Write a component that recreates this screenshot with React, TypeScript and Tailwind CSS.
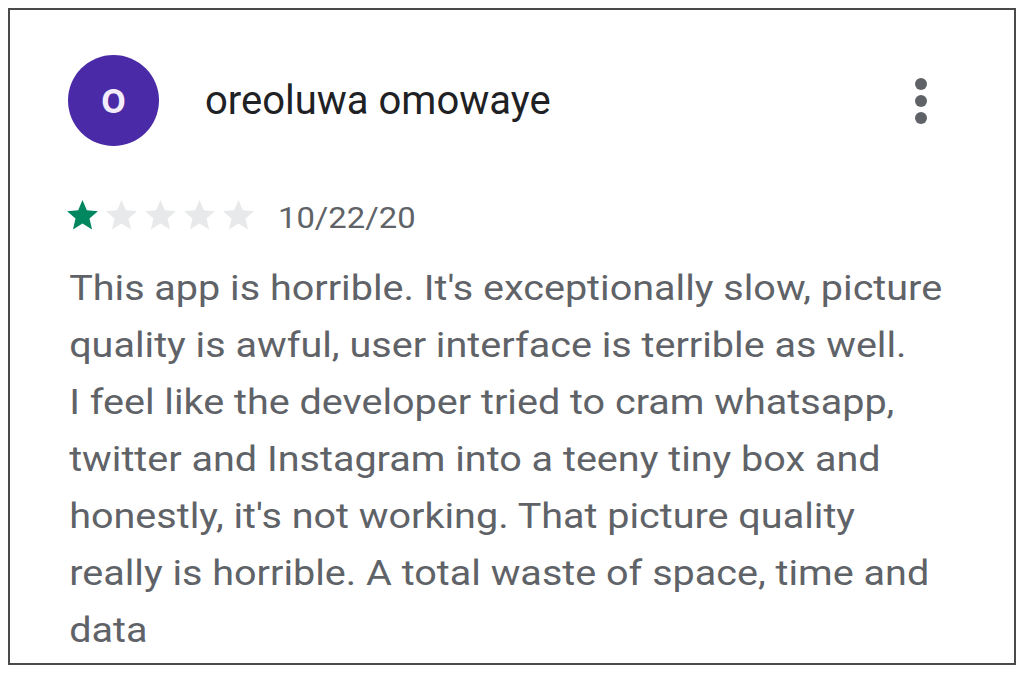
import React from 'react';

const lines = [
  "This app is horrible. It's exceptionally slow, picture",
  'quality is awful, user interface is terrible as well.',
  'I feel like the developer tried to cram whatsapp,',
  'twitter and Instagram into a teeny tiny box and',
  "honestly, it's not working. That picture quality",
  'really is horrible. A total waste of space, time and',
  'data',
];

function Star({ filled }: { filled: boolean }) {
  return (
    <svg width="37" height="37" viewBox="0 0 24 24" className={filled ? 'text-[#01875f]' : 'text-[#e8e9eb]'}>
      <path
        fill="currentColor"
        d="M12 17.27L18.18 21l-1.64-7.03L22 9.24l-7.19-.61L12 2 9.19 8.63 2 9.24l5.46 4.73L5.82 21z"
      />
    </svg>
  );
}

export default function App() {
  const rating = 1;

  return (
    <div className="w-[1024px] h-[673px] bg-white pt-2 pl-2" style={{ fontFamily: 'Roboto, "Liberation Sans", sans-serif' }}>
      <div className="w-[1008px] h-[657px] border-2 border-[#4a4a4a] pl-[58px] pt-[45px] overflow-hidden">
        {/* Header */}
        <div className="flex items-center h-[91px]">
          <div className="w-[91px] h-[91px] rounded-full bg-[#4a2aa6] flex items-center justify-center shrink-0">
            <span className="text-[44px] font-medium text-[#f5ecfb] leading-none -mt-[6px]">o</span>
          </div>
          <div className="ml-[46px] text-[40px] text-[#202124] leading-none">oreoluwa omowaye</div>
          <div className="ml-auto mr-[87px] flex flex-col gap-[5px]">
            <span className="w-3 h-3 rounded-full bg-[#5f6368]" />
            <span className="w-3 h-3 rounded-full bg-[#5f6368]" />
            <span className="w-3 h-3 rounded-full bg-[#5f6368]" />
          </div>
        </div>

        {/* Rating */}
        <div className="flex items-center h-[37px] mt-[51px] -ml-[4px]">
          <div className="flex gap-[2px]">
            {[1, 2, 3, 4, 5].map((i) => (
              <Star key={i} filled={i <= rating} />
            ))}
          </div>
          <span className="ml-[21px] text-[29px] text-[#5f6368] leading-[37px] mt-[5px] inline-block scale-x-[1.13] origin-left">
            10/22/20
          </span>
        </div>

        {/* Review body */}
        <div className="mt-[26px] pl-[1px] text-[35px] leading-[57px] text-[#5f6368] scale-x-[1.13] origin-left">
          {lines.map((l, i) => (
            <div key={i} className="whitespace-nowrap">
              {l}
            </div>
          ))}
        </div>
      </div>
    </div>
  );
}
